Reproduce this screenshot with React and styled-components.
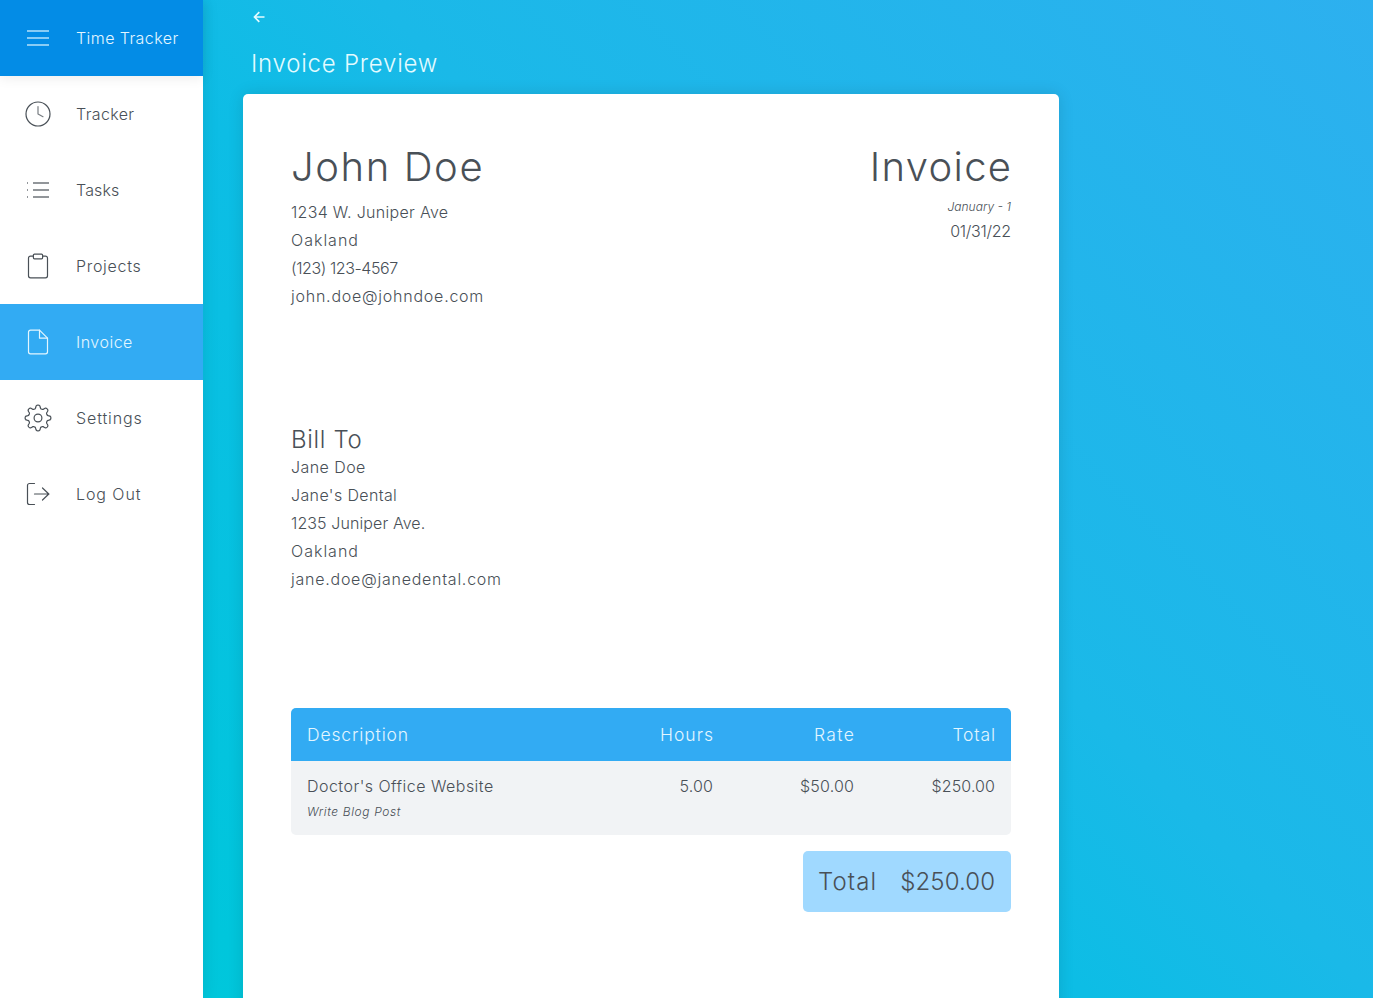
import React from "react";
import styled, { createGlobalStyle, css } from "styled-components";

const GlobalStyle = createGlobalStyle`
  *, *::before, *::after { box-sizing: border-box; }
  html, body, #root { height: 100%; }
  body {
    margin: 0;
    overflow: hidden;
    font-family: Inter, "Open Sans", sans-serif;
    font-size: 16px;
    font-weight: 300;
    color: #495057;
  }
  h1, h2, p { margin: 0; font-weight: 300; }
`;

const Shell = styled.div`
  display: flex;
  height: 998px;
  overflow: hidden;
  background: linear-gradient(45deg, #00cad9 0%, #00c6dc 12%, #0dbde5 46%, #1ab9e8 58%, #2db0ef 100%);
`;

const Sidebar = styled.nav`
  position: relative;
  flex: none;
  width: 203px;
  background: #fff;
  box-shadow: 0 0 16px rgba(0, 0, 0, 0.1);
`;

const NavItem = styled.a`
  display: flex;
  align-items: center;
  gap: 24px;
  height: 76px;
  padding-left: 24px;
  white-space: nowrap;
  ${(p) => p.$brand && css`
    background: #038ce6;
    color: #e3f6ff;
    box-shadow: 0 2px 12px rgba(0, 0, 0, 0.08);
  `}
  ${(p) => p.$active && css`
    background: #32abf3;
    color: #e3f6ff;
  `}
`;

const Icon = styled.svg`
  display: block;
  flex: none;
  fill: none;
  stroke: currentColor;
  stroke-width: ${(p) => p.$stroke || 1.2};
  stroke-linecap: round;
  stroke-linejoin: round;
`;

const Text = styled.span`
  margin-right: ${(p) => -(p.$track || 0)}px;
  letter-spacing: ${(p) => p.$track || 0}px;
  white-space: nowrap;
`;

const Main = styled.main`
  flex: 1;
  min-width: 0;
  padding-left: 40px;
`;

const BackLink = styled.a`
  display: flex;
  height: 34px;
  padding: 9px 0 0 8px;
  color: #e3fbff;
`;

const PageTitle = styled.h1`
  height: 60px;
  padding-left: 8px;
  font-size: 24px;
  line-height: 60px;
  color: #e3fbff;
`;

const Sheet = styled.section`
  width: 816px;
  height: 1056px;
  padding: 48px;
  border-radius: 5px;
  background: #fff;
  box-shadow: 0 0 16px rgba(0, 0, 0, 0.12);
`;

const SheetHead = styled.header`
  display: flex;
  justify-content: space-between;
  height: 284px;
`;

const Party = styled.div`
  line-height: 28px;
`;

const Issue = styled.div`
  text-align: right;
`;

const Heading = styled.h1`
  height: 56px;
  font-size: 40px;
  line-height: 50px;
`;

const SubHeading = styled.h2`
  font-size: 24px;
  line-height: 27px;
`;

const Note = styled.p`
  font-size: 12px;
  font-style: italic;
  line-height: ${(p) => p.$line}px;
`;

const DateLine = styled.p`
  line-height: 30px;
`;

const BillTo = styled.div`
  height: 282px;
  line-height: 28px;
`;

const Table = styled.div`
  border-radius: 5px;
  overflow: hidden;
  background: #f1f3f5;
`;

const Row = styled.div`
  display: grid;
  grid-template-columns: 265px repeat(3, 141px);
  padding: ${(p) => (p.$head ? "0 16px" : "11px 16px")};
  line-height: 28px;
  ${(p) => p.$head && css`
    background: #32abf3;
    color: #e3f6ff;
    font-size: 17.5px;
    line-height: 53px;
  `}
`;

const Cell = styled.div`
  text-align: ${(p) => (p.$num ? "right" : "left")};
  white-space: nowrap;
`;

const TotalBox = styled.div`
  display: flex;
  justify-content: space-between;
  width: 208px;
  margin: 16px 0 0 auto;
  padding: 0 16px 0 15px;
  border-radius: 5px;
  background: #a0d9ff;
  font-size: 24px;
  line-height: 61px;
`;

const gearOutline = (() => {
  const points = [];
  for (let i = 0; i < 192; i += 1) {
    const a = (i / 192) * Math.PI * 2;
    const wave = Math.cos(8 * a);
    const r = 11.2 + 1.65 * Math.tanh(1.8 * wave) / Math.tanh(1.8);
    points.push(`${(14 + r * Math.cos(a)).toFixed(2)} ${(14 + r * Math.sin(a)).toFixed(2)}`);
  }
  return `M${points.join("L")}Z`;
})();

const glyphs = {
  menu: <path strokeOpacity=".6" strokeWidth="1.8" strokeLinecap="butt" d="M3 7h22M3 14h22M3 21h22" />,
  clock: (
    <>
      <circle cx="14" cy="14" r="12" />
      <path strokeOpacity=".75" d="M14 6.5V14l5 2.7" />
    </>
  ),
  list: (
    <path strokeOpacity=".6" strokeWidth="1.8" strokeLinecap="butt" d="M9 7h16M9 14h16M9 21h16M3 7h1M3 14h1M3 21h1" />
  ),
  clipboard: (
    <>
      <path d="M9.4 4.2H6.5a2 2 0 0 0-2 2v17.6a2 2 0 0 0 2 2h15a2 2 0 0 0 2-2V6.2a2 2 0 0 0-2-2h-2.9" />
      <rect x="9.4" y="2.2" width="9.2" height="4.6" rx="1" />
    </>
  ),
  file: (
    <>
      <path d="M15.5 2.2h-9a2 2 0 0 0-2 2v19.6a2 2 0 0 0 2 2h15a2 2 0 0 0 2-2V10.2z" />
      <path d="M15.5 2.2v8h8" />
    </>
  ),
  gear: (
    <>
      <path d={gearOutline} />
      <circle cx="14" cy="14" r="3.9" />
    </>
  ),
  logout: (
    <>
      <path d="M10.5 3.5H5.5a2 2 0 0 0-2 2v17a2 2 0 0 0 2 2h5" />
      <path d="M10.5 14H25M18.5 8l6.3 6-6.3 6" />
    </>
  ),
};

const navigation = [
  { icon: "menu", label: "Time Tracker", brand: true, track: 0.42 },
  { icon: "clock", label: "Tracker", track: 0.36 },
  { icon: "list", label: "Tasks", track: 0.15 },
  { icon: "clipboard", label: "Projects", track: 0.7 },
  { icon: "file", label: "Invoice", active: true, track: 0.5 },
  { icon: "gear", label: "Settings", track: 0.88 },
  { icon: "logout", label: "Log Out", track: 0.92 },
];

const sender = [
  ["1234 W. Juniper Ave", 0.3],
  ["Oakland", 1],
  ["(123) 123-4567", -0.42],
  ["john.doe@johndoe.com", 0.76],
];

const client = [
  ["Jane Doe", 0.44],
  ["Jane's Dental", 0.37],
  ["1235 Juniper Ave.", 0.1],
  ["Oakland", 1],
  ["jane.doe@janedental.com", 0.75],
];

const Lines = ({ items }) =>
  items.map(([line, track]) => (
    <p key={line}>
      <Text $track={track}>{line}</Text>
    </p>
  ));

export default function App() {
  return (
    <>
      <GlobalStyle />
      <Shell>
        <Sidebar>
          {navigation.map((item) => (
            <NavItem key={item.label} $brand={item.brand} $active={item.active}>
              <Icon width="28" height="28" viewBox="0 0 28 28">{glyphs[item.icon]}</Icon>
              <Text $track={item.track}>{item.label}</Text>
            </NavItem>
          ))}
        </Sidebar>
        <Main>
          <BackLink>
            <Icon width="16" height="16" viewBox="0 0 16 16" $stroke={1.7}>
              <path strokeLinecap="butt" strokeLinejoin="miter" d="M13.5 8H3.5M8.3 3.2L3.5 8l4.8 4.8" />
            </Icon>
          </BackLink>
          <PageTitle><Text $track={0.77}>Invoice Preview</Text></PageTitle>
          <Sheet>
            <SheetHead>
              <Party>
                <Heading><Text $track={1.6}>John Doe</Text></Heading>
                <Lines items={sender} />
              </Party>
              <Issue>
                <Heading><Text $track={1.3}>Invoice</Text></Heading>
                <Note $line={18}><Text>January - 1</Text></Note>
                <DateLine><Text $track={-0.3}>01/31/22</Text></DateLine>
              </Issue>
            </SheetHead>
            <BillTo>
              <SubHeading><Text $track={0.68}>Bill To</Text></SubHeading>
              <Lines items={client} />
            </BillTo>
            <Table>
              <Row $head>
                <Cell><Text $track={0.85}>Description</Text></Cell>
                <Cell $num><Text $track={1}>Hours</Text></Cell>
                <Cell $num><Text $track={1.4}>Rate</Text></Cell>
                <Cell $num><Text $track={0.85}>Total</Text></Cell>
              </Row>
              <Row>
                <Cell>
                  <Text $track={0.47}>Doctor's Office Website</Text>
                  <Note $line={24}><Text $track={0.61}>Write Blog Post</Text></Note>
                </Cell>
                <Cell $num><Text $track={0.2}>5.00</Text></Cell>
                <Cell $num><Text $track={0.2}>$50.00</Text></Cell>
                <Cell $num><Text $track={0.1}>$250.00</Text></Cell>
              </Row>
            </Table>
            <TotalBox>
              <Text $track={1.1}>Total</Text>
              <Text $track={0.1}>$250.00</Text>
            </TotalBox>
          </Sheet>
        </Main>
      </Shell>
    </>
  );
}
